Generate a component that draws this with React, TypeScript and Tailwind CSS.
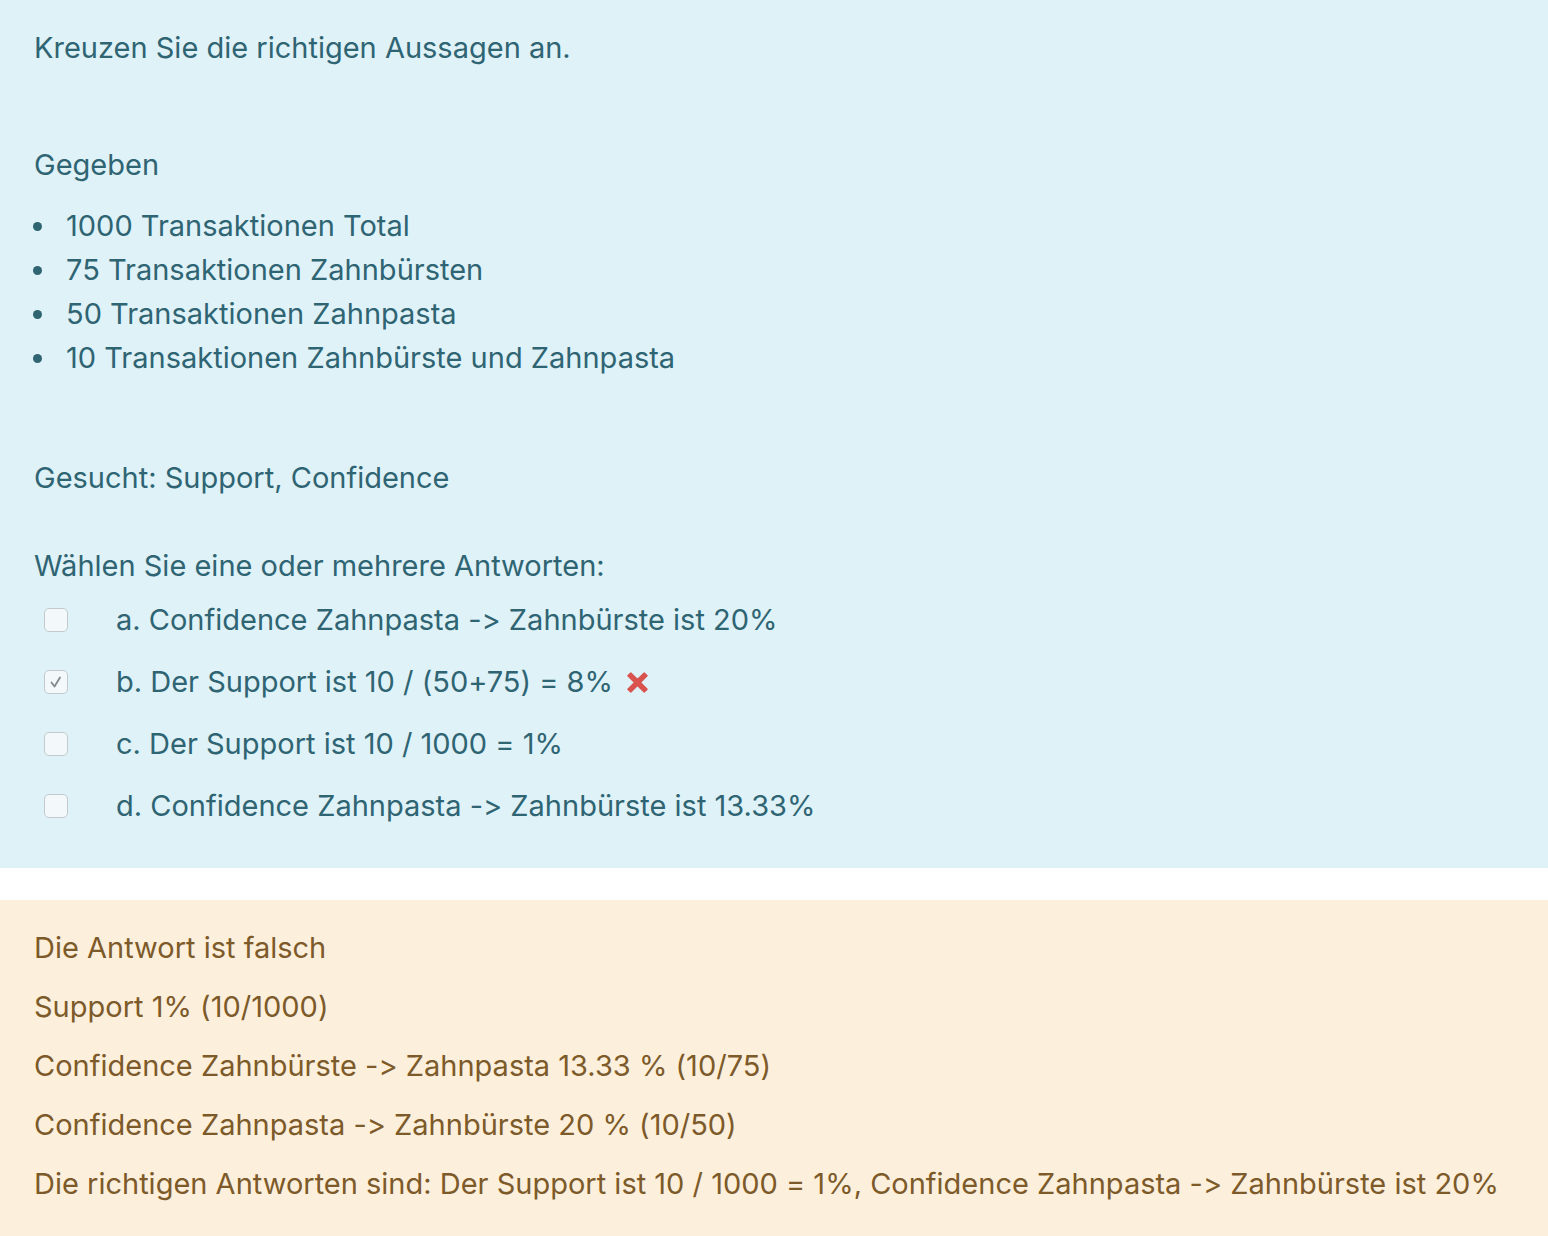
import React from "react";

const font = {
  fontFamily: "Inter, 'Noto Sans', 'Liberation Sans', sans-serif",
  fontFeatureSettings: "'calt' 0, 'liga' 0",
};

function Box({ checked }: { checked?: boolean }) {
  return (
    <div className="w-[24px] h-[24px] rounded-[5px] border border-[#c3c9cd] bg-[#f3f8fa] flex items-center justify-center shrink-0">
      {checked && (
        <svg width="16" height="16" viewBox="0 0 16 16" fill="none">
          <path d="M3.5 8.5 L6.5 12.5 L12 3.5" stroke="#85898c" strokeWidth="1.8" strokeLinecap="round" strokeLinejoin="round" />
        </svg>
      )}
    </div>
  );
}

function RedX() {
  return (
    <svg width="23" height="23" viewBox="0 0 24 24" className="ml-[13px]">
      <path
        d="M5 2 L12 9 L19 2 L22 5 L15 12 L22 19 L19 22 L12 15 L5 22 L2 19 L9 12 L2 5 Z"
        fill="#d9534f"
        strokeLinejoin="round"
        stroke="#d9534f"
        strokeWidth="1.5"
      />
    </svg>
  );
}

const options = [
  { label: "a. Confidence Zahnpasta -> Zahnbürste ist 20%", checked: false, wrong: false },
  { label: "b. Der Support ist 10 / (50+75) = 8%", checked: true, wrong: true },
  { label: "c. Der Support ist 10 / 1000 = 1%", checked: false, wrong: false },
  { label: "d. Confidence Zahnpasta -> Zahnbürste ist 13.33%", checked: false, wrong: false },
];

export default function App() {
  return (
    <div className="w-[1548px] min-h-[1236px] bg-white" style={font}>
      <div className="bg-[#def2f8] text-[#2f6473] text-[29px] px-[34px] pt-[26px] pb-[31px]">
        <p className="h-[44px] leading-[44px]">Kreuzen Sie die richtigen Aussagen an.</p>
        <p className="h-[44px] leading-[44px] mt-[73px]">Gegeben</p>
        <ul className="mt-[17px]">
          {[
            "1000 Transaktionen Total",
            "75 Transaktionen Zahnbürsten",
            "50 Transaktionen Zahnpasta",
            "10 Transaktionen Zahnbürste und Zahnpasta",
          ].map((t) => (
            <li key={t} className="h-[44px] leading-[44px] flex items-center">
              <span className="w-[9px] h-[9px] rounded-full bg-[#2f6473] ml-[-1px] mr-[24px]" />
              <span>{t}</span>
            </li>
          ))}
        </ul>
        <p className="h-[44px] leading-[44px] mt-[76px]">Gesucht: Support, Confidence</p>
        <p className="h-[44px] leading-[44px] mt-[44px]">Wählen Sie eine oder mehrere Antworten:</p>
        <div className="mt-[1px]">
          {options.map((o) => (
            <div key={o.label} className="h-[62px] flex items-center">
              <div className="ml-[10px] w-[72px]">
                <Box checked={o.checked} />
              </div>
              <span className="leading-[44px]">{o.label}</span>
              {o.wrong && <RedX />}
            </div>
          ))}
        </div>
      </div>
      <div className="h-[32px]" />
      <div className="bg-[#fcefdc] text-[#7d5a29] text-[29px] px-[34px] pt-[26px] pb-[30px] flex flex-col gap-[15px]">
        <p className="h-[44px] leading-[44px]">Die Antwort ist falsch</p>
        <p className="h-[44px] leading-[44px]">Support 1% (10/1000)</p>
        <p className="h-[44px] leading-[44px]">Confidence Zahnbürste -&gt; Zahnpasta 13.33 % (10/75)</p>
        <p className="h-[44px] leading-[44px]">Confidence Zahnpasta -&gt; Zahnbürste 20 % (10/50)</p>
        <p className="h-[44px] leading-[44px] whitespace-nowrap">
          Die richtigen Antworten sind: Der Support ist 10 / 1000 = 1%, Confidence Zahnpasta -&gt; Zahnbürste ist 20%
        </p>
      </div>
    </div>
  );
}
